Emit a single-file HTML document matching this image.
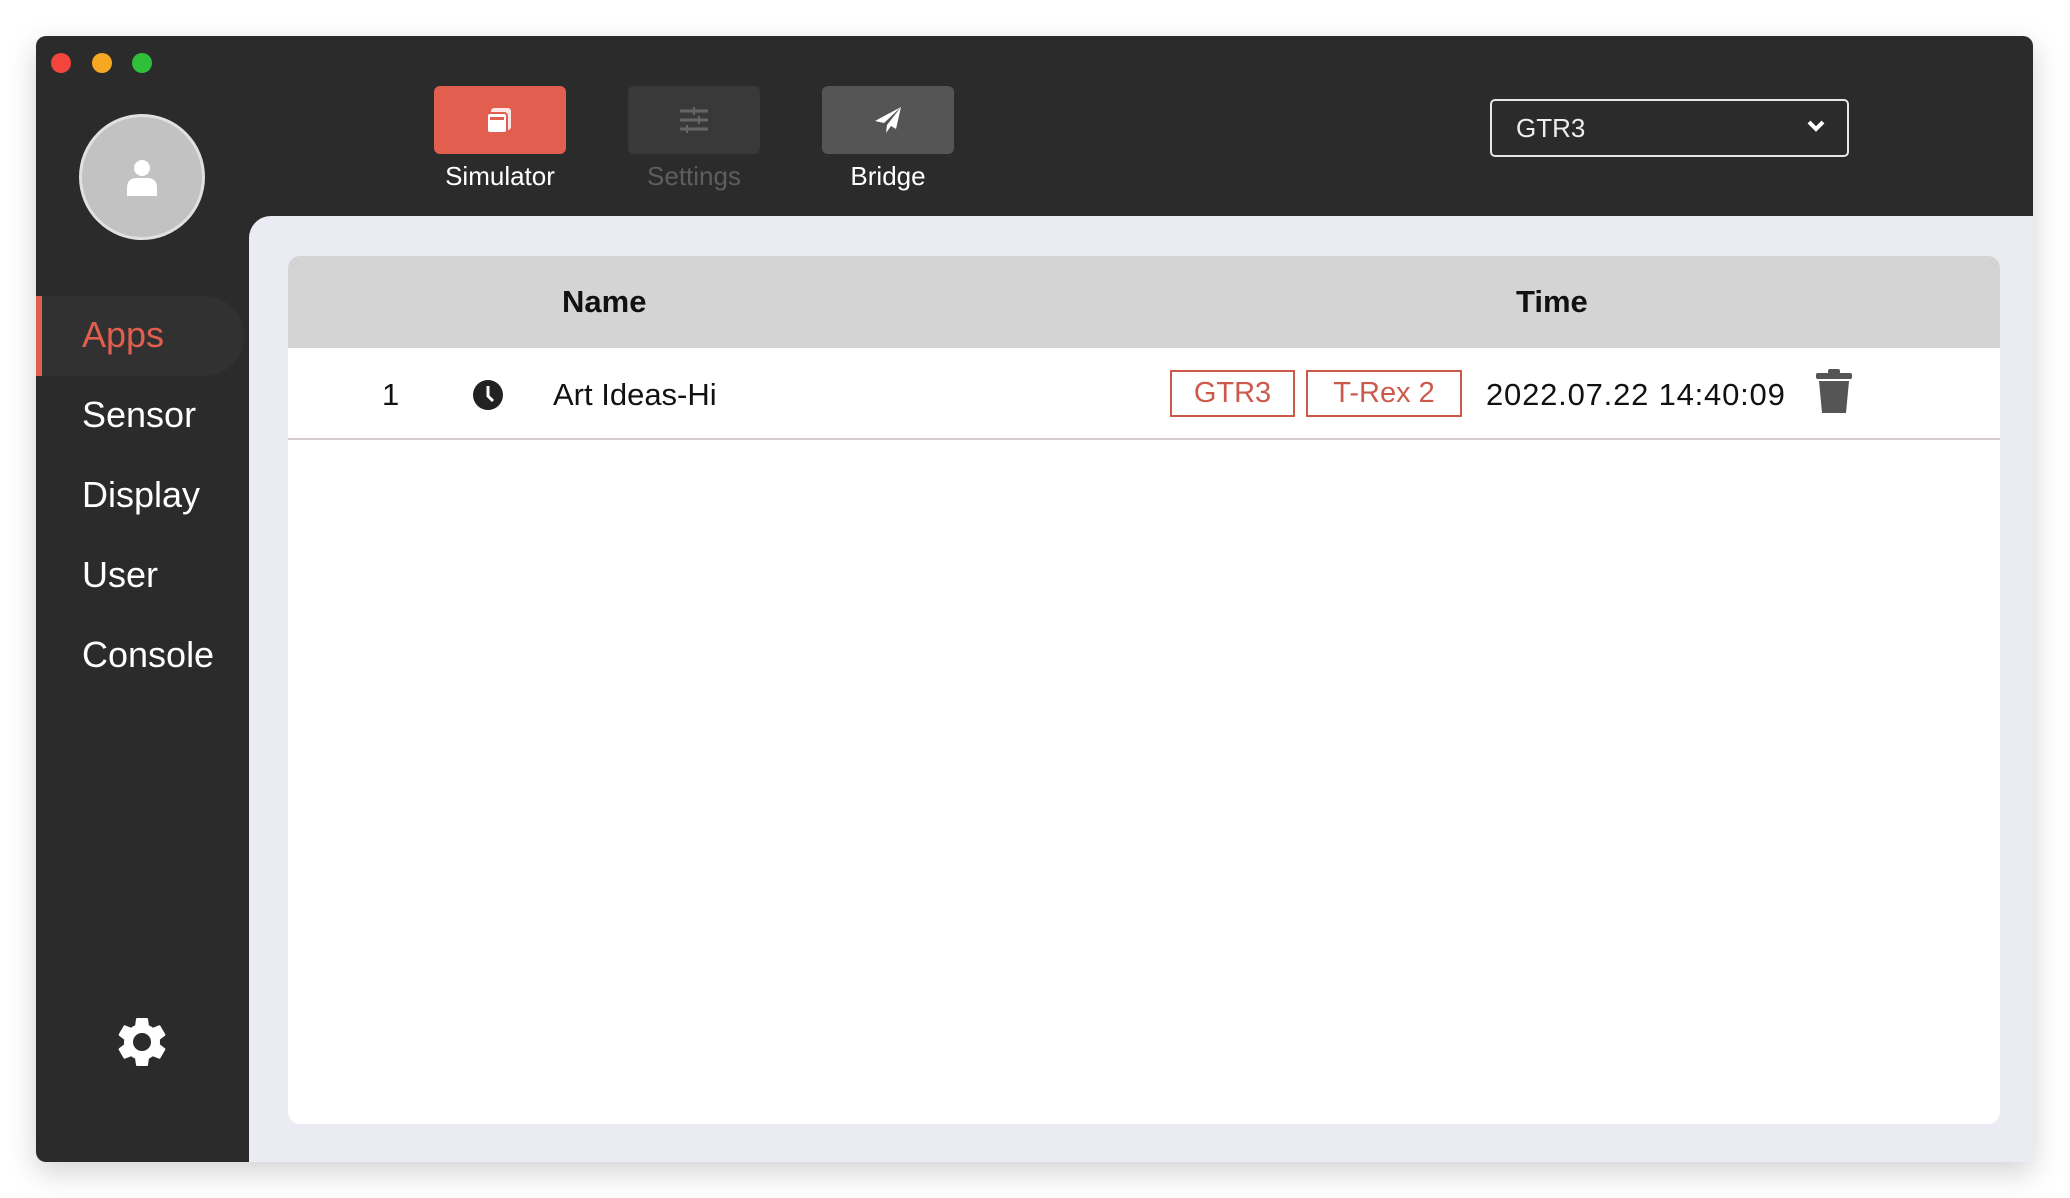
<!DOCTYPE html>
<html><head><meta charset="utf-8"><style>
*{margin:0;padding:0;box-sizing:border-box}
body{width:2070px;height:1198px;background:#fff;position:relative;overflow:hidden;font-family:"Liberation Sans",Helvetica,Arial,sans-serif}
.win{position:absolute;left:36px;top:36px;width:1997px;height:1126px;background:#2b2b2b;border-radius:10px 10px 0 10px;overflow:hidden;box-shadow:0 10px 30px rgba(0,0,0,.18)}
.dot{position:absolute;top:53px;width:20px;height:20px;border-radius:50%}
.abs{position:absolute}
.btn{position:absolute;top:86px;width:132px;height:68px;border-radius:6px;display:flex;align-items:center;justify-content:center}
.lbl{position:absolute;top:161px;width:180px;text-align:center;font-size:26px;color:#fff}
.menu{position:absolute;left:82px;font-size:36px;color:#fff;line-height:40px}
</style></head><body>
<div class="win"></div>
<div class="dot" style="left:51px;background:#f4453d"></div>
<div class="dot" style="left:92px;background:#f7a823"></div>
<div class="dot" style="left:132px;background:#2fbf3a"></div>
<div class="abs" style="left:79px;top:114px;width:126px;height:126px;border-radius:50%;background:#c2c2c2;border:3px solid #e0e0e0"></div>
<svg class="abs" style="left:124px;top:158px" width="36" height="40" viewBox="0 0 36 40"><circle cx="18" cy="10" r="8" fill="#fff"/><path d="M3 38 V30 Q3 20 13 20 H23 Q33 20 33 30 V38 Z" fill="#fff"/></svg>

<div class="btn" style="left:434px;background:#e25e4f"><svg width="30" height="30" viewBox="0 0 30 30"><rect x="6" y="3" width="20" height="22" rx="3" fill="#fff" opacity=".85"/><rect x="2" y="8" width="20" height="20" rx="3" fill="#fff" stroke="#e25e4f" stroke-width="2"/><rect x="5" y="12" width="14" height="3" fill="#e25e4f"/></svg></div>
<div class="btn" style="left:628px;background:#393939"><svg width="30" height="26" viewBox="0 0 30 26"><g stroke="#666" stroke-width="3"><path d="M1 4H29M1 13H29M1 22H29"/><path d="M15 0V8M20 9V17M8 18V26" stroke-width="2"/></g></svg></div>
<div class="btn" style="left:822px;background:#555"><svg width="30" height="30" viewBox="0 0 30 30"><path d="M28 2 L2 16 L11 18 L28 2 L14 20 L13 28 L18 21 L23 24 Z" fill="#fff"/></svg></div>
<div class="lbl" style="left:410px">Simulator</div>
<div class="lbl" style="left:604px;color:#5e5e5e">Settings</div>
<div class="lbl" style="left:798px">Bridge</div>

<div class="abs" style="left:1490px;top:99px;width:359px;height:58px;border:2px solid #e6e6e6;border-radius:5px"></div>
<div class="abs" style="left:1516px;top:113px;font-size:26px;color:#eee">GTR3</div>
<svg class="abs" style="left:1806px;top:118px" width="20" height="16" viewBox="0 0 20 16"><path d="M3 4 L10 11 L17 4" fill="none" stroke="#fff" stroke-width="4"/></svg>

<div class="abs" style="left:36px;top:296px;width:208px;height:80px;background:#313131;border-radius:0 40px 40px 0"></div>
<div class="abs" style="left:36px;top:296px;width:6px;height:80px;background:#e25e4f"></div>
<div class="menu" style="top:315px;color:#e25e4f">Apps</div>
<div class="menu" style="top:395px">Sensor</div>
<div class="menu" style="top:475px">Display</div>
<div class="menu" style="top:555px">User</div>
<div class="menu" style="top:635px">Console</div>
<svg class="abs" style="left:112px;top:1012px" width="60" height="60" viewBox="0 0 24 24"><path fill="#fff" d="M19.14 12.94c.04-.3.06-.61.06-.94 0-.32-.02-.64-.07-.94l2.030-1.58a.49.49 0 0 0 .12-.61l-1.92-3.32a.49.49 0 0 0-.59-.22l-2.39.96c-.5-.38-1.03-.7-1.62-.94l-.36-2.54a.48.48 0 0 0-.48-.41h-3.84c-.24 0-.43.17-.47.41l-.36 2.54c-.59.24-1.13.57-1.62.94l-2.39-.96a.48.48 0 0 0-.59.22L2.74 8.87c-.12.21-.08.47.12.61l2.03 1.58c-.05.3-.09.63-.09.94s.02.64.07.94l-2.03 1.58a.49.49 0 0 0-.12.61l1.92 3.32c.12.22.37.29.59.22l2.39-.96c.5.38 1.03.7 1.62.94l.36 2.54c.05.24.24.41.48.41h3.84c.24 0 .44-.17.47-.41l.36-2.54c.59-.24 1.13-.56 1.62-.94l2.39.96c.22.08.47 0 .59-.22l1.92-3.32c.12-.22.07-.47-.12-.61l-2.01-1.58zM12 15.6A3.6 3.6 0 1 1 12 8.4a3.6 3.6 0 0 1 0 7.2z"/></svg>

<div class="abs" style="left:249px;top:216px;width:1784px;height:946px;background:#ebebf3;border-top-left-radius:22px"></div>
<div class="abs" style="left:288px;top:256px;width:1712px;height:868px;background:#fff;border-radius:12px;overflow:hidden">
  <div style="height:92px;background:#d4d4d4"></div>
  <div style="position:absolute;top:182px;left:0;right:0;height:2px;background:#d6cccc"></div>
</div>
<div class="abs" style="left:562px;top:284px;font-size:31px;font-weight:bold;color:#111">Name</div>
<div class="abs" style="left:1516px;top:284px;font-size:31px;font-weight:bold;color:#111">Time</div>
<div class="abs" style="left:382px;top:377px;font-size:31px;color:#111">1</div>
<svg class="abs" style="left:472px;top:379px" width="32" height="32" viewBox="0 0 32 32"><circle cx="16" cy="16" r="15" fill="#222"/><path d="M16 7 V17 L21 22" fill="none" stroke="#fff" stroke-width="3"/></svg>
<div class="abs" style="left:553px;top:377px;font-size:31px;color:#111">Art Ideas-Hi</div>
<div class="abs" style="left:1170px;top:370px;width:125px;height:47px;border:2px solid #cc5a4c;color:#cc5a4c;font-size:29px;text-align:center;line-height:43px">GTR3</div>
<div class="abs" style="left:1306px;top:370px;width:156px;height:47px;border:2px solid #cc5a4c;color:#cc5a4c;font-size:29px;text-align:center;line-height:43px">T-Rex 2</div>
<div class="abs" style="left:1486px;top:377px;font-size:31px;color:#111;letter-spacing:0.8px">2022.07.22 14:40:09</div>
<svg class="abs" style="left:1814px;top:369px" width="40" height="45" viewBox="0 0 40 45"><rect x="14" y="0" width="12" height="5" rx="2" fill="#555"/><rect x="2" y="4" width="36" height="6" rx="2" fill="#555"/><path d="M5 12 H35 L32 44 H8 Z" fill="#555"/></svg>
</body></html>
